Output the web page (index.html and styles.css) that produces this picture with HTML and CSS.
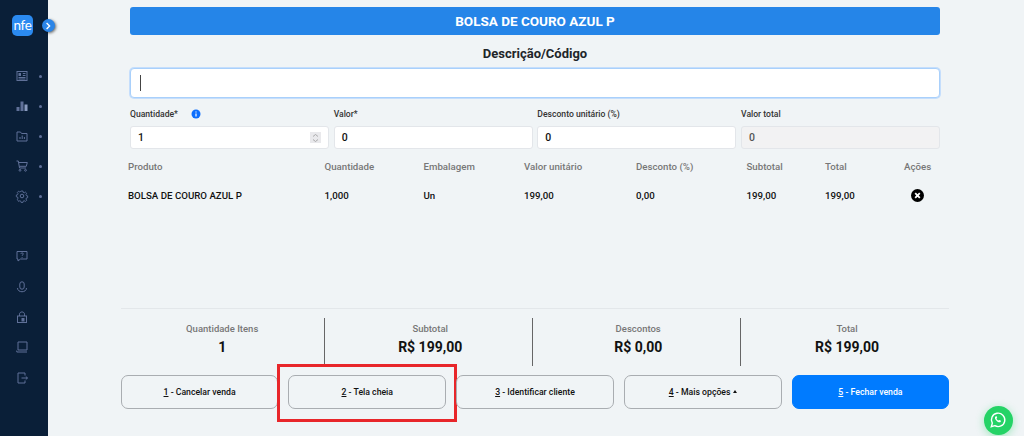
FILE: index.html
```html
<!DOCTYPE html>
<html lang="pt-BR">
<head>
  <meta charset="UTF-8">
  <title>Frente de caixa</title>
  <link rel="stylesheet" href="styles.css">
</head>
<body>

  <aside class="sidebar">
    <div class="logo">nfe</div>
    <button class="toggle">
      <svg width="8" height="8" viewBox="0 0 8 8"><path d="M2.6 1l3 3-3 3" fill="none" stroke="#fff" stroke-width="1.4"/></svg>
    </button>

    <nav class="menu">
      <div class="menu-item">
        <svg viewBox="0 0 12 12"><rect x="1" y="1.5" width="10" height="9" /><path d="M2.5 7.5h7M2.5 9h7M6.8 3.500h2.700M6.800 5.500h2.700" /><rect class="fill" x="2.500" y="3" width="2.500" height="3" /></svg>
        <span class="dot"></span>
      </div>
      <div class="menu-item">
        <svg viewBox="0 0 12 12"><rect class="fill" x="0.500" y="7" width="3" height="4" /><rect class="fill" x="4.500" y="1.500" width="3" height="9.500" /><rect class="fill alt" x="8.500" y="4.500" width="3" height="6.500" /></svg>
        <span class="dot"></span>
      </div>
      <div class="menu-item">
        <svg viewBox="0 0 12 12"><path d="M1 2h3.500l1 1.500H11v7.500H1z" /><path d="M4 9V7M6.200 9V5.500M8.400 9V7" /></svg>
        <span class="dot"></span>
      </div>
      <div class="menu-item">
        <svg viewBox="0 0 12 12"><path d="M0.500 1h1.800l1.200 7h6.500M2.600 2.500h8.700l-1 3.800H3.300" /><circle cx="4" cy="10.300" r="0.900" /><circle cx="9.500" cy="10.300" r="0.900" /></svg>
        <span class="dot"></span>
      </div>
      <div class="menu-item">
        <svg viewBox="0 0 12 12"><path d="M5 .7h2l.3 1.500 1.200.5 1.300-.8 1.400 1.400-.8 1.300.5 1.200 1.400.3v2l-1.400.3-.5 1.200.8 1.300-1.400 1.400-1.300-.8-1.200.5-.3 1.400H5l-.3-1.400-1.200-.5-1.300.8L.8 9.900l.8-1.300-.5-1.200L-.3 7.100v-2l1.400-.3.500-1.200-.8-1.300 1.400-1.400 1.300.8 1.200-.5z" transform="translate(.6 .4) scale(.9)" /><circle cx="6" cy="6" r="1.800" /></svg>
        <span class="dot"></span>
      </div>
    </nav>

    <nav class="menu menu-bottom">
      <div class="menu-item">
        <svg viewBox="0 0 12 12"><path d="M1 1.500h10v7.500H4.500L2 11V9H1z" /><path d="M4.800 3.800c.2-1.200 2.500-1.200 2.500.1 0 1-1.200 1-1.200 1.900M6.100 7v.8" /></svg>
      </div>
      <div class="menu-item">
        <svg viewBox="0 0 12 12"><rect x="3.800" y="0.800" width="4.400" height="7.400" rx="2.200" /><path d="M1.500 7c0 5 9 5 9 0" /></svg>
      </div>
      <div class="menu-item">
        <svg viewBox="0 0 12 12"><rect x="1.500" y="5" width="9" height="6.500" /><path d="M3.500 5V3.200c0-3 5-3 5 0V5" /><rect class="fill" x="5.500" y="7" width="3" height="3.500" /></svg>
      </div>
      <div class="menu-item">
        <svg viewBox="0 0 12 12"><path d="M2 1h9v8H2z" /><path d="M.800 9.500v1.500h10.200" /></svg>
      </div>
      <div class="menu-item">
        <svg viewBox="0 0 12 12"><path d="M9 3.500V1H2v10h7V8.500" /><path d="M5.500 6h6M9.800 4.500L11.500 6 9.800 7.500" /></svg>
      </div>
    </nav>
  </aside>

  <main class="main">
    <div class="sale-form">
      <div class="product-banner">BOLSA DE COURO AZUL P</div>
      <h2 class="search-title">Descrição/Código</h2>
      <div class="search-input"><span class="caret"></span></div>

      <div class="fields">
        <div class="field">
          <label class="field-label">Quantidade*
            <svg class="info" width="10" height="10" viewBox="0 0 10 10"><circle cx="5" cy="5" r="4.500" fill="#0d6efd"/><path d="M5 4.400v3M5 2.400v1" stroke="#fff" stroke-width="1.200"/></svg>
          </label>
          <div class="input">1
            <span class="spinner">
              <svg width="7" height="10" viewBox="0 0 7 10"><path d="M1 3.500l2.500-2 2.500 2M1 6.500l2.500 2 2.500-2" fill="none" stroke="#9a9a9a" stroke-width=".8"/></svg>
            </span>
          </div>
        </div>
        <div class="field">
          <label class="field-label">Valor*</label>
          <div class="input">0</div>
        </div>
        <div class="field">
          <label class="field-label">Desconto unitário (%)</label>
          <div class="input">0</div>
        </div>
        <div class="field">
          <label class="field-label">Valor total</label>
          <div class="input input-disabled">0</div>
        </div>
      </div>
    </div>

    <table class="items">
      <colgroup>
        <col class="c-prod"><col class="c-qty"><col class="c-emb"><col class="c-unit">
        <col class="c-desc"><col class="c-sub"><col class="c-total"><col class="c-act">
      </colgroup>
      <thead>
        <tr>
          <th>Produto</th><th>Quantidade</th><th>Embalagem</th><th>Valor unitário</th>
          <th>Desconto (%)</th><th>Subtotal</th><th>Total</th><th>Ações</th>
        </tr>
      </thead>
      <tbody>
        <tr>
          <td>BOLSA DE COURO AZUL P</td><td>1,000</td><td>Un</td><td>199,00</td>
          <td>0,00</td><td>199,00</td><td>199,00</td>
          <td class="action">
            <svg width="13" height="13" viewBox="0 0 13 13"><circle cx="6.500" cy="6.500" r="6.500" fill="#000"/><path d="M4.200 4.200l4.600 4.600M8.800 4.200l-4.600 4.600" stroke="#fff" stroke-width="1.800"/></svg>
          </td>
        </tr>
      </tbody>
    </table>

    <div class="footer">
      <div class="stats">
        <div class="stat"><span class="stat-label">Quantidade Itens</span><strong class="stat-value">1</strong></div>
        <div class="stat"><span class="stat-label">Subtotal</span><strong class="stat-value">R$ 199,00</strong></div>
        <div class="stat"><span class="stat-label">Descontos</span><strong class="stat-value">R$ 0,00</strong></div>
        <div class="stat"><span class="stat-label">Total</span><strong class="stat-value">R$ 199,00</strong></div>
      </div>

      <div class="actions">
        <button class="btn"><u>1</u> - Cancelar venda</button>
        <button class="btn btn-marked"><u>2</u> - Tela cheia<span class="marker"></span></button>
        <button class="btn"><u>3</u> - Identificar cliente</button>
        <button class="btn"><u>4</u> - Mais opções <span class="caret-up"></span></button>
        <button class="btn btn-primary"><u>5</u> - Fechar venda</button>
      </div>
    </div>
  </main>

  <a class="whatsapp">
    <svg width="18" height="18" viewBox="0 0 18 18"><path d="M2.300 15.700l1-3.500a6.700 6.700 0 1 1 2.500 2.500z" fill="none" stroke="#fff" stroke-width="1.400"/><path d="M6.500 5.500c-1 1 -.6 2.700 1 4.300s3.300 2 4.200 1l.3-1-1.700-.9-.8.700c-.9-.3-1.700-1.100-2-2l.7-.8-.8-1.700z" fill="#fff"/></svg>
  </a>

</body>
</html>
```

FILE: styles.css
```css
* {
  box-sizing: border-box;
}
body {
  margin: 0;
  height: 436px;
  overflow: hidden;
  display: flex;
  background: #f0f4f6;
  font-family: 'Roboto', sans-serif;
  color: #111;
}

/* sidebar */
.sidebar {
  position: relative;
  width: 48px;
  flex-shrink: 0;
  background: #0a1f38;
  padding-top: 15px;
}
.logo {
  width: 21px;
  height: 21px;
  margin-left: 12px;
  background: #2b8af0;
  border-radius: 5px;
  color: #fff;
  font-family: 'Lato', sans-serif;
  font-size: 13.500px;
  letter-spacing: -0.300px;
  line-height: 20px;
  text-align: center;
}
.toggle {
  position: absolute;
  top: 19px;
  left: 41.500px;
  width: 13px;
  height: 13px;
  padding: 0;
  border: none;
  border-radius: 50%;
  background: #2b85e8;
  box-shadow: 1px 1px 3px rgba(0,0,0,0.6);
  display: flex;
  align-items: center;
  justify-content: center;
}
.menu {
  margin-top: 34px;
  display: flex;
  flex-direction: column;
  gap: 18.100px;
}
.menu-bottom {
  margin-top: 48.100px;
  gap: 18.300px;
}
.menu-item {
  height: 12px;
  padding-left: 16px;
  display: flex;
  align-items: center;
}
.menu-item svg {
  width: 12px;
  height: 12px;
  fill: none;
  stroke: #5f7098;
  stroke-width: 1;
  overflow: visible;
}
.menu-item svg .fill {
  fill: #5f7098;
  stroke: none;
}
.menu-item svg .alt {
  fill: #8a9cc0;
}
.dot {
  width: 3px;
  height: 3px;
  margin-left: 11px;
  border-radius: 50%;
  background: #5f7098;
}

/* main area */
.main {
  flex: 1;
  padding: 7px 74.700px 0 72.700px;
  display: flex;
  flex-direction: column;
}
.sale-form {
  margin-left: 9.300px;
  width: 810px;
}
.product-banner {
  height: 28px;
  background: #2585e8;
  border-radius: 3px;
  color: #fff;
  font-size: 13.500px;
  font-weight: 700;
  line-height: 28px;
  text-align: center;
}
.search-title {
  margin: 9px 0 5px;
  font-size: 13px;
  font-weight: 700;
  line-height: 19px;
  color: #212529;
  text-align: center;
}
.search-input {
  height: 30px;
  background: #fff;
  border: 1px solid #a9d0fb;
  border-radius: 4px;
  box-shadow: 0 0 0 1px #c5defc;
  padding: 6px 9px;
}
.caret {
  display: block;
  width: 1px;
  height: 16px;
  background: #444;
}
.fields {
  margin-top: 9px;
  display: grid;
  grid-template-columns: repeat(4, 199px);
  gap: 4.700px;
}
.field-label {
  display: block;
  height: 19px;
  font-size: 8.600px;
  font-weight: 500;
  line-height: 14px;
  color: #333;
}
.info {
  margin-left: 11px;
  vertical-align: -1.500px;
}
.input {
  height: 23px;
  background: #fff;
  border: 1px solid #e3e6ea;
  border-radius: 3px;
  padding: 0 7px;
  font-size: 10.500px;
  font-weight: 500;
  line-height: 21px;
  display: flex;
  justify-content: space-between;
  align-items: center;
}
.input-disabled {
  background: #f2f2f3;
  color: #555;
}
.spinner {
  width: 11px;
  height: 11px;
  background: #e9e9ec;
  display: flex;
  align-items: center;
  justify-content: center;
}

/* table */
.items {
  margin: 9px 0 0 7.300px;
  width: 803px;
  table-layout: fixed;
  border-collapse: collapse;
  font-size: 9.700px;
}
.c-prod { width: 196.500px; }
.c-qty { width: 99px; }
.c-emb { width: 100.500px; }
.c-unit { width: 112px; }
.c-desc { width: 110.500px; }
.c-sub { width: 78.500px; }
.c-total { width: 79px; }
.items th {
  height: 16px;
  padding: 0;
  font-weight: 500;
  color: #777;
  text-align: left;
  white-space: nowrap;
}
.items td {
  height: 42px;
  padding: 0;
  font-weight: 500;
  color: #111;
  white-space: nowrap;
}
.action svg {
  display: block;
  margin: 0 auto;
}

/* footer */
.footer {
  margin-top: 92px;
  border-top: 1px solid #e3e7ea;
}
.stats {
  margin-top: 9px;
  display: grid;
  grid-template-columns: 204px 208px 208px 1fr;
  height: 48px;
}
.stat {
  padding-top: 5px;
  padding-left: 4px;
  border-right: 1px solid #666;
  display: flex;
  flex-direction: column;
  align-items: center;
}
.stat:first-child {
  padding-left: 0;
}
.stat:last-child {
  border-right: none;
}
.stat-label {
  font-size: 9.500px;
  font-weight: 500;
  line-height: 12px;
  color: #777;
}
.stat-value {
  margin-top: 3px;
  font-size: 14px;
  font-weight: 700;
  line-height: 18px;
  color: #111;
}
.actions {
  margin-top: 9px;
  display: grid;
  grid-template-columns: repeat(5, 1fr);
  gap: 10px;
}
.btn {
  position: relative;
  height: 34px;
  padding: 0;
  background: transparent;
  border: 1px solid #a9adb1;
  border-radius: 7px;
  font-family: inherit;
  font-size: 8.700px;
  font-weight: 500;
  color: #111;
}
.btn-primary {
  background: #007bff;
  border-color: #007bff;
  color: #fff;
}
.marker {
  position: absolute;
  top: -12px;
  left: -12px;
  right: -12px;
  bottom: -14px;
  border: 3px solid #e8262a;
}
.caret-up {
  display: inline-block;
  vertical-align: 2px;
  border-left: 2.500px solid transparent;
  border-right: 2.500px solid transparent;
  border-bottom: 3px solid #111;
}
.whatsapp {
  position: fixed;
  left: 983.500px;
  top: 405.500px;
  width: 29px;
  height: 29px;
  border-radius: 50%;
  background: #25d366;
  box-shadow: 0 2px 8px rgba(37,211,102,0.4);
  display: flex;
  align-items: center;
  justify-content: center;
}
```
